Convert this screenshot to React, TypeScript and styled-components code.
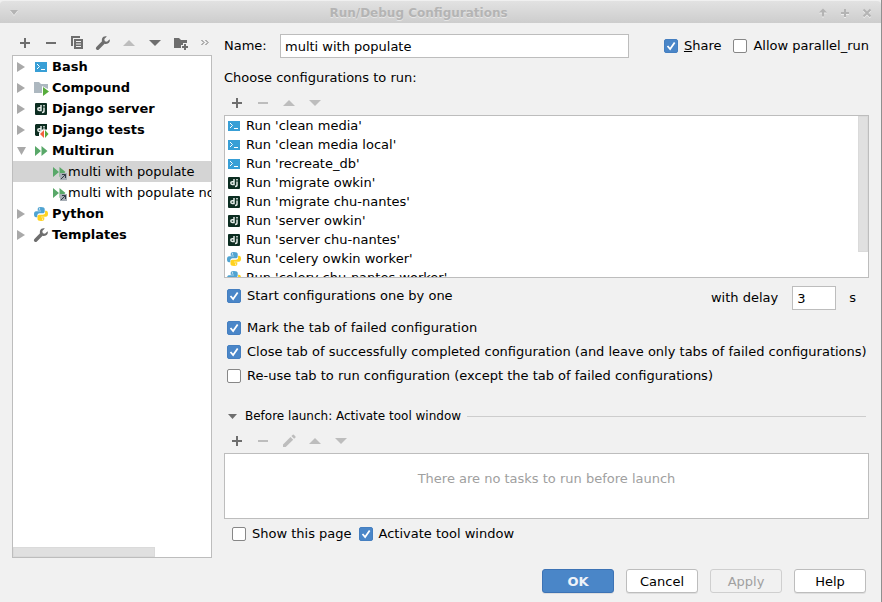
import React, { useState } from 'react';
import styled, { createGlobalStyle, css } from 'styled-components';

const GlobalStyle = createGlobalStyle`
  *, *::before, *::after { box-sizing: border-box; }
  body {
    margin: 0;
    background: #f1f1f1;
    color: #000;
    font: 13px/16px "DejaVu Sans", Verdana, sans-serif;
  }
  button, input { font: inherit; color: inherit; margin: 0; }
`;

const Window = styled.div`
  display: flex;
  flex-direction: column;
  min-height: 100vh;
  background: #f1f1f1;
  border-right: 1px solid #8f8f8f;
`;

const TitleBar = styled.header`
  display: flex;
  align-items: center;
  height: 23px;
  padding: 2px 3px 0 3px;
  border-top: 1px solid #f0f0f0;
  border-radius: 4px 4px 0 0;
  background: linear-gradient(#e2e2e2, #cdcdcd);
  color: #b4b4b4;
`;

const Title = styled.h1`
  flex: 1;
  margin: 0;
  text-align: center;
  font-size: 12px;
  font-weight: bold;
  text-shadow: 0 1px 0 #e6e6e6;
`;

const WindowButton = styled.button`
  display: grid;
  place-items: center;
  width: 22px;
  height: 18px;
  padding: 0;
  border: 0;
  background: none;
  filter: drop-shadow(0 1px 0 #ececec);
`;

const Body = styled.main`
  flex: 1;
  display: flex;
  gap: 12px;
  padding: 10px 12px 0;
`;

const Sidebar = styled.aside`
  display: flex;
  flex-direction: column;
  width: 200px;
  flex: none;
`;

const Toolbar = styled.div`
  display: flex;
  align-items: flex-start;
  flex: none;
  height: 22px;
`;

const ToolButton = styled.button<{ $narrow?: boolean }>`
  display: grid;
  flex: none;
  place-items: center;
  width: ${p => (p.$narrow ? 18 : 26)}px;
  height: 20px;
  padding: 0;
  border: 0;
  background: none;
  color: #6e6e6e;
  &:disabled { color: #bdbdbd; }
`;

const Tree = styled.ul`
  flex: 1;
  position: relative;
  margin: 0;
  padding: 0;
  list-style: none;
  overflow: hidden;
  background: #fff;
  border: 1px solid #bdbdbd;
`;

const TreeRow = styled.li<{ $child?: boolean; $selected?: boolean }>`
  display: flex;
  align-items: center;
  height: 21px;
  white-space: nowrap;
  ${p => p.$child
    ? css`padding-left: 39px;`
    : css`padding-left: 4px; gap: 3px; font-weight: bold;`}
  background: ${p => (p.$selected ? '#d4d4d4' : 'transparent')};
`;

const Expander = styled.svg`
  width: 9px;
  height: 10px;
  margin-right: 4px;
  flex: none;
  fill: #a9a9a9;
`;

const TreeIcon = styled.span`
  display: grid;
  flex: none;
  color: #6e6e6e;
`;

const ScrollThumb = styled.div<{ $vertical?: boolean }>`
  position: absolute;
  background: #e0e0e0;
  border: 1px solid #dadada;
  ${p => p.$vertical
    ? css`top: 0; right: 0; width: 10px; height: 136px;`
    : css`left: 0; bottom: 0; height: 10px; width: 142px;`}
`;

const Editor = styled.section`
  flex: 1;
  min-width: 0;
  display: flex;
  flex-direction: column;
`;

const NameRow = styled.div`
  display: flex;
  align-items: center;
  height: 26px;
`;

const NameLabel = styled.label`
  width: 56px;
  flex: none;
`;

const TextField = styled.input`
  height: 24px;
  padding: 0 4px;
  border: 1px solid #bdbdbd;
  background: #fff;
  outline: none;
`;

const NameField = styled(TextField)`
  flex: 1;
  min-width: 0;
  margin-right: 35px;
`;

const DelayField = styled(TextField)`
  width: 44px;
  margin: 0 13px 0 14px;
`;

const CheckLabel = styled.label`
  display: flex;
  align-items: center;
  gap: 6px;
  white-space: nowrap;
`;

const CheckCell = styled.span`
  display: grid;
  width: 14px;
  height: 14px;
  flex: none;
  > * { grid-area: 1 / 1; }
  > svg { pointer-events: none; }
`;

const CheckBox = styled.input`
  appearance: none;
  width: 14px;
  height: 14px;
  border: 1px solid #878787;
  border-radius: 2px;
  background: #fff;
  &:checked { background: #4a86c8; border-color: #457fc0; }
`;

const ShareGroup = styled.div`
  display: flex;
  gap: 12px;
`;

const Caption = styled.p`
  margin: 11px 0 7px;
`;

const ConfigList = styled.div`
  position: relative;
  height: 163px;
  overflow: hidden;
  background: #fff;
  border: 1px solid #bdbdbd;
`;

const ConfigItems = styled.ul`
  margin: 0;
  padding: 0;
  list-style: none;
`;

const ConfigRow = styled.li`
  display: flex;
  align-items: center;
  gap: 4px;
  height: 19px;
  padding-left: 1px;
`;

const DelayRow = styled.div`
  display: flex;
  justify-content: space-between;
  align-items: flex-start;
  padding: 8px 13px 0 3px;
`;

const StartCell = styled.div`
  padding-top: 2px;
`;

const DelayCell = styled.div`
  display: flex;
  align-items: center;
`;

const Options = styled.div`
  display: grid;
  gap: 8px;
  padding: 10px 0 0 3px;
`;

const SectionHeader = styled.h2`
  display: flex;
  align-items: center;
  gap: 8px;
  margin: 24px 3px 7px 4px;
  font-size: 12px;
  font-weight: normal;
  &::after {
    content: "";
    flex: 1;
    height: 1px;
    margin-left: -2px;
    background: #cdcdcd;
  }
`;

const TaskBox = styled.div`
  height: 66px;
  padding-top: 17px;
  text-align: center;
  color: #a0a0a0;
  background: #fff;
  border: 1px solid #bdbdbd;
`;

const PageOptions = styled.div`
  display: flex;
  gap: 7px;
  padding: 7px 8px 6px;
`;

const Footer = styled.footer`
  display: flex;
  justify-content: flex-end;
  gap: 12px;
  padding: 11px 15px 9px;
`;

const DialogButton = styled.button<{ $primary?: boolean }>`
  width: 72px;
  height: 24px;
  padding: 2px 0 0;
  border: 1px solid ${p => (p.$primary ? '#3d73b5' : '#bdbdbd')};
  border-radius: 3px;
  background: ${p => (p.$primary ? '#4a86c8' : '#fff')};
  color: ${p => (p.$primary ? '#eef3f9' : '#000')};
  font-weight: ${p => (p.$primary ? 'bold' : 'normal')};
  box-shadow: 0 1px 0 #dedede;
  &:disabled {
    background: #f1f1f1;
    border-color: #cfcfcf;
    color: #a0a0a0;
    box-shadow: none;
  }
`;

const Mnemonic = styled.u`
  text-underline-offset: 1px;
  text-decoration-skip-ink: none;
`;

const glyphs: Record<string, React.ReactNode> = {
  add: <path fill="currentColor" d="M7 3h2v4h4v2H9v4H7V9H3V7h4z" />,
  remove: <path fill="currentColor" d="M3 7h10v2H3z" />,
  copy: (
    <g fill="currentColor">
      <path d="M2 1h9v2H4v8H2z" />
      <path fillRule="evenodd" d="M5 4h9v10H5zM7 6v1h5V6zM7 8.500v1h5v-1zM7 11v1h5v-1z" />
    </g>
  ),
  wrench: (
    <path fill="currentColor" d="M14.600 4.200 12 6.700 9.800 6.200 9.300 4 11.800 1.500C9.900.8 7.900 1.700 7.100 3.400 6.700 4.400 6.700 5.400 7 6.300L1.400 11.900a1.800 1.800 0 0 0 0 2.500 1.800 1.800 0 0 0 2.500 0L9.600 8.800c1 .4 2.200.3 3.200-.2 1.700-.8 2.500-2.700 1.800-4.400z" />
  ),
  up: <path fill="currentColor" d="M8 5l6 6H2z" />,
  down: <path fill="currentColor" d="M2 5h12l-6 6z" />,
  folderAdd: (
    <g fill="currentColor">
      <path d="M1 3h5l2 2h6v3h-4v2H8v3H1z" />
      <path d="M11 9h2v2h2v2h-2v2h-2v-2H9v-2h2z" />
    </g>
  ),
  more: <path fill="none" stroke="currentColor" d="M6.500 5l2.500 2.500L6.500 10M10.500 5l2.500 2.500L10.500 10" />,
  edit: <path fill="currentColor" d="M2 11.500 9.500 4l2.700 2.700L4.700 14H2zM10.400 3.100l1.400-1.400a.8.8 0 0 1 1 0l1.700 1.700a.8.8 0 0 1 0 1l-1.400 1.400z" />,
  bash: (
    <g>
      <path fill="#389fd6" d="M2 3h12v10H2z" />
      <path fill="none" stroke="#fff" d="M4 5l2.500 2.500L4 10M8 10.500h4" />
    </g>
  ),
  compound: (
    <g>
      <path fill="#adb8c0" d="M1 2h5l2 2h7v5l-6-3v7H1z" />
      <path fill="#57ad3c" d="M10 7l6 4.500-6 4.500z" />
    </g>
  ),
  django: (
    <g>
      <rect x="2" y="2" width="12" height="12" rx="1" fill="#0c2d21" />
      <path fill="none" stroke="#e4ebe8" strokeWidth="1.500" d="M8 4v5.500H6.200a1.400 1.400 0 0 1 0-2.800H8M11 6.500v3.500q0 1.500-2 1.500" />
      <path fill="#e4ebe8" d="M10.200 4h1.600v1.400h-1.600z" />
    </g>
  ),
  djangoTests: (
    <g>
      <path fill="#0c2d21" d="M3 2h11v5.500H9L6 11v3H3l-1-1V3z" />
      <path fill="none" stroke="#e4ebe8" strokeWidth="1.500" d="M8 4v5.500H6.200a1.400 1.400 0 0 1 0-2.800H8M11 6.200V8" />
      <path fill="#e4ebe8" d="M10.200 4h1.600v1.400h-1.600z" />
      <path fill="#f4603d" d="M11 8v8l-4-4z" />
      <path fill="#59a83c" d="M12 8v8l3.500-4z" />
    </g>
  ),
  multirun: <path fill="#59a869" d="M2 3l6 5-6 5zM8.500 3l6 5-6 5z" />,
  multirunItem: (
    <g>
      <path fill="#59a869" d="M1 3l6 5-6 5zM7.500 3l6 5-6 5z" />
      <path fill="#a6adb5" d="M8 9h7v7H8z" />
      <path fill="none" stroke="#323c48" d="M9 15l4.500-4.500M10 10.500h3.500V14" />
    </g>
  ),
  python: (
    <g>
      <path fill="#4fa3d1" d="M7.800 1C5.500 1 4.700 1.800 4.700 3v1.700H8v.6H3.200C1.700 5.300 1 6.400 1 8.200s.7 3 2 3h1.300V9.500c0-1.300 1-2.300 2.300-2.300h3.300c1 0 1.800-.8 1.800-1.800V3c0-1.200-1.200-2-3.900-2z" />
      <path fill="#ffd21e" d="M8.200 15c2.300 0 3.100-.8 3.100-2v-1.700H8v-.6h4.800c1.500 0 2.200-1.100 2.200-2.900s-.7-3-2-3h-.9v1.700c0 1.300-1 2.300-2.300 2.300H6.300c-1 0-1.800.8-1.800 1.800V13c0 1.200 1.100 2 3.700 2z" />
      <circle cx="6.500" cy="2.900" r=".7" fill="#fff" />
      <circle cx="9.600" cy="13.100" r=".7" fill="#fff" />
    </g>
  ),
  check: <path fill="none" stroke="#fff" strokeWidth="2" d="M4 8l3 3.500L12.200 4" />,
  shade: <path fill="currentColor" d="M4 5h8l-4 5z" />,
  maximize: <path fill="currentColor" d="M8 3.500l4 4H9v4H7v-4H4z" />,
  plusWindow: <path fill="currentColor" d="M7 4h2v3h3v2H9v3H7V9H4V7h3z" />,
  close: <path fill="none" stroke="currentColor" strokeWidth="2" d="M4.500 4.500l7 7M11.500 4.500l-7 7" />,
};

const Icon = ({ name, size = 16 }: { name: string; size?: number }) => (
  <svg width={size} height={size} viewBox="0 0 16 16" aria-hidden="true">
    {glyphs[name]}
  </svg>
);

type Tool = { icon: string; label: string; disabled?: boolean };

const Tools = ({ items, children }: { items: Tool[]; children?: React.ReactNode }) => (
  <Toolbar role="toolbar">
    {items.map(t => (
      <ToolButton key={t.icon} type="button" aria-label={t.label} disabled={t.disabled}>
        <Icon name={t.icon} />
      </ToolButton>
    ))}
    {children}
  </Toolbar>
);

const Check = ({ initial = false, children }: { initial?: boolean; children: React.ReactNode }) => {
  const [on, setOn] = useState(initial);
  return (
    <CheckLabel>
      <CheckCell>
        <CheckBox type="checkbox" checked={on} onChange={e => setOn(e.target.checked)} />
        {on && <Icon name="check" size={14} />}
      </CheckCell>
      <span>{children}</span>
    </CheckLabel>
  );
};

const tree = [
  { icon: 'bash', text: 'Bash' },
  { icon: 'compound', text: 'Compound' },
  { icon: 'django', text: 'Django server' },
  { icon: 'djangoTests', text: 'Django tests' },
  { icon: 'multirun', text: 'Multirun', open: true },
  { icon: 'multirunItem', text: 'multi with populate', child: true, selected: true },
  { icon: 'multirunItem', text: 'multi with populate no', child: true },
  { icon: 'python', text: 'Python' },
  { icon: 'wrench', text: 'Templates' },
];

const configs = [
  ['bash', 'clean media'],
  ['bash', 'clean media local'],
  ['bash', 'recreate_db'],
  ['django', 'migrate owkin'],
  ['django', 'migrate chu-nantes'],
  ['django', 'server owkin'],
  ['django', 'server chu-nantes'],
  ['python', 'celery owkin worker'],
  ['python', 'celery chu-nantes worker'],
];

const treeTools: Tool[] = [
  { icon: 'add', label: 'Add' },
  { icon: 'remove', label: 'Remove' },
  { icon: 'copy', label: 'Copy' },
  { icon: 'wrench', label: 'Edit templates' },
  { icon: 'up', label: 'Move up', disabled: true },
  { icon: 'down', label: 'Move down' },
  { icon: 'folderAdd', label: 'New folder' },
];

const listTools: Tool[] = [
  { icon: 'add', label: 'Add' },
  { icon: 'remove', label: 'Remove', disabled: true },
  { icon: 'up', label: 'Move up', disabled: true },
  { icon: 'down', label: 'Move down', disabled: true },
];

const taskTools: Tool[] = [
  listTools[0],
  listTools[1],
  { icon: 'edit', label: 'Edit', disabled: true },
  listTools[2],
  listTools[3],
];

export default function App() {
  return (
    <>
      <GlobalStyle />
      <Window>
        <TitleBar>
          <WindowButton type="button" aria-label="Window menu"><Icon name="shade" /></WindowButton>
          <Title>Run/Debug Configurations</Title>
          <WindowButton type="button" aria-label="Shade"><Icon name="maximize" /></WindowButton>
          <WindowButton type="button" aria-label="Maximize"><Icon name="plusWindow" /></WindowButton>
          <WindowButton type="button" aria-label="Close"><Icon name="close" /></WindowButton>
        </TitleBar>
        <Body>
          <Sidebar>
            <Tools items={treeTools}>
              <ToolButton $narrow type="button" aria-label="More"><Icon name="more" /></ToolButton>
            </Tools>
            <Tree>
              {tree.map(n => (
                <TreeRow key={n.text} $child={n.child} $selected={n.selected}>
                  {!n.child && (
                    <Expander viewBox="0 0 9 10">
                      <path d={n.open ? 'M0 1h9L4.500 9z' : 'M0 0l8 5-8 5z'} />
                    </Expander>
                  )}
                  <TreeIcon><Icon name={n.icon} /></TreeIcon>
                  <span>{n.text}</span>
                </TreeRow>
              ))}
              <ScrollThumb as="li" aria-hidden="true" />
            </Tree>
          </Sidebar>
          <Editor>
            <NameRow>
              <NameLabel htmlFor="name">Name:</NameLabel>
              <NameField id="name" defaultValue="multi with populate" />
              <ShareGroup>
                <Check initial><Mnemonic>S</Mnemonic>hare</Check>
                <Check>Allow parallel_run</Check>
              </ShareGroup>
            </NameRow>
            <Caption>Choose configurations to run:</Caption>
            <Tools items={listTools} />
            <ConfigList>
              <ConfigItems>
                {configs.map(([icon, text]) => (
                  <ConfigRow key={text}>
                    <Icon name={icon} />
                    <span>Run '{text}'</span>
                  </ConfigRow>
                ))}
              </ConfigItems>
              <ScrollThumb $vertical />
            </ConfigList>
            <DelayRow>
              <StartCell><Check initial>Start configurations one by one</Check></StartCell>
              <DelayCell>
                <label htmlFor="delay">with delay</label>
                <DelayField id="delay" defaultValue="3" />
                <span>s</span>
              </DelayCell>
            </DelayRow>
            <Options>
              <Check initial>Mark the tab of failed configuration</Check>
              <Check initial>Close tab of successfully completed configuration (and leave only tabs of failed configurations)</Check>
              <Check>Re-use tab to run configuration (except the tab of failed configurations)</Check>
            </Options>
            <SectionHeader>
              <svg width="9" height="5" viewBox="0 0 9 5" aria-hidden="true"><path fill="#6e6e6e" d="M0 0h9L4.500 5z" /></svg>
              Before launch: Activate tool window
            </SectionHeader>
            <Tools items={taskTools} />
            <TaskBox>There are no tasks to run before launch</TaskBox>
            <PageOptions>
              <Check>Show this page</Check>
              <Check initial>Activate tool window</Check>
            </PageOptions>
          </Editor>
        </Body>
        <Footer>
          <DialogButton $primary type="button">OK</DialogButton>
          <DialogButton type="button">Cancel</DialogButton>
          <DialogButton type="button" disabled>Apply</DialogButton>
          <DialogButton type="button">Help</DialogButton>
        </Footer>
      </Window>
    </>
  );
}
